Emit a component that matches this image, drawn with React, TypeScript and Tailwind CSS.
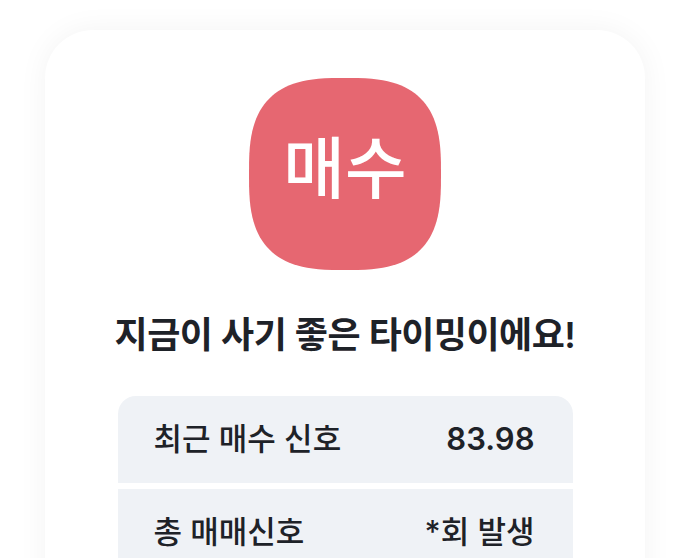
const font = { fontFamily: 'Inter, "Noto Sans CJK KR", "Noto Sans", sans-serif' };

function squirclePath(size: number, n = 2.9) {
  const r = size / 2;
  const pts: string[] = [];
  for (let i = 0; i <= 360; i += 3) {
    const t = (i * Math.PI) / 180;
    const c = Math.cos(t);
    const s = Math.sin(t);
    const x = r + r * Math.sign(c) * Math.pow(Math.abs(c), 2 / n);
    const y = r + r * Math.sign(s) * Math.pow(Math.abs(s), 2 / n);
    pts.push(`${x.toFixed(2)},${y.toFixed(2)}`);
  }
  return `M${pts.join('L')}Z`;
}

function Badge() {
  return (
    <div className="relative flex size-[192px] items-center justify-center">
      <svg className="absolute inset-0" width="192" height="192" viewBox="0 0 192 192">
        <path d={squirclePath(192)} fill="#E66771" />
      </svg>
      <span className="relative pb-3 text-[67px] font-medium leading-none text-white">매수</span>
    </div>
  );
}

function Row({
  label,
  value,
  top,
  numeric,
}: {
  label: string;
  value: string;
  top?: boolean;
  numeric?: boolean;
}) {
  return (
    <div
      className={
        'flex h-[87px] items-center justify-between bg-[#EFF2F6] pl-9 pr-[38px] text-[31px] font-medium text-[#1E2228] ' +
        (top ? 'rounded-t-[18px]' : '')
      }
    >
      <span>{label}</span>
      <span className={numeric ? 'font-semibold' : ''}>{value}</span>
    </div>
  );
}

export default function App() {
  return (
    <div className="h-[558px] w-[690px] overflow-hidden bg-white" style={font}>
      <div className="ml-[45px] mt-[30px] flex h-[600px] w-[600px] flex-col items-center rounded-[48px] bg-white pt-12 shadow-[0_0_30px_rgba(0,0,0,0.05)]">
        <Badge />
        <h1 className="mt-[47px] text-[36px] font-semibold leading-none tracking-[-0.5px] text-[#1E2228]">
          지금이 사기 좋은 타이밍이에요!
        </h1>
        <div className="mt-[43px] flex w-[455px] flex-col gap-1.5">
          <Row label="최근 매수 신호" value="83.98" top numeric />
          <Row label="총 매매신호" value="*회 발생" />
        </div>
      </div>
    </div>
  );
}
